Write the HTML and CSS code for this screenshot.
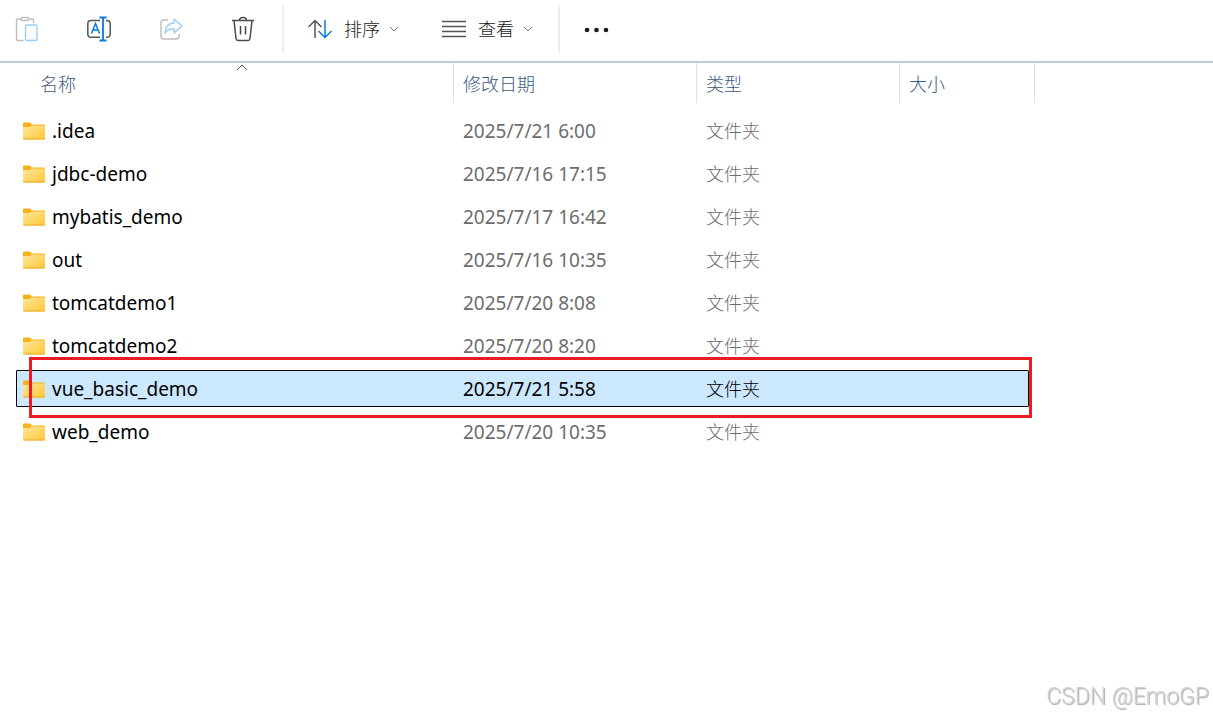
FILE: index.html
```html
<!DOCTYPE html>
<html lang="zh-CN">

<head>
    <meta charset="UTF-8">
    <meta name="viewport" content="width=device-width, initial-scale=1.0">
    <title>文件夹</title>
    <link rel="stylesheet" href="styles.css">
</head>

<body>
    <svg class="defs" width="0" height="0">
        <defs>
            <linearGradient id="folderFill" x1="0" y1="0" x2="1" y2="1">
                <stop offset="0" stop-color="#ffe69c" />
                <stop offset="1" stop-color="#ffc937" />
            </linearGradient>
            <symbol id="folder" viewBox="0 0 22 18">
                <path d="M0 1.500Q0 .5 1 .5H6.500Q7.500 .5 8 1.500L8.500 2.500H21Q22 2.500 22 3.500V8H0Z" fill="#f7b21b" />
                <path d="M0 5H7L8.500 3.500H22V16.500Q22 17.500 21 17.500H1Q0 17.500 0 16.500Z" fill="url(#folderFill)" />
                <path d="M0 16.500H22Q22 17.500 21 17.500H1Q0 17.500 0 16.500Z" fill="#eba92a" />
            </symbol>
        </defs>
    </svg>

    <div class="toolbar">
        <div class="icons">
            <button class="iconBtn" aria-label="粘贴" disabled>
                <svg width="24" height="26" viewBox="0 0 24 26" fill="none" stroke-width="1.400">
                    <path d="M6 3H3Q1.500 3 1.500 4.500V23Q1.500 24.500 3 24.500H8.500M14.500 3H17Q18.500 3 18.500 4.500V7" stroke="#bdbdbd" />
                    <rect x="6" y="1.500" width="8" height="3" rx="1.500" stroke="#bdbdbd" fill="#fff" />
                    <rect x="10.500" y="9" width="11.500" height="15.500" rx="1.500" stroke="#9dcdf3" fill="#fafdff" />
                </svg>
            </button>
            <button class="iconBtn" aria-label="重命名">
                <svg width="24" height="26" viewBox="0 0 24 26" fill="none" stroke-width="1.500">
                    <path d="M13 4.500H4Q.800 4.500 .800 8V18Q.800 21.300 4 21.300H13M19 4.500H20Q23.200 4.500 23.200 8V18Q23.200 21.300 20 21.300H19" stroke="#555" />
                    <path d="M4.500 17.500L8.500 7.500L12.500 17.500M6 14H11" stroke="#0b7ad6" />
                    <path d="M16 2V24M12.500 1.500H19.500M12.500 24.500H19.500" stroke="#0b7ad6" stroke-width="1.800" />
                </svg>
            </button>
            <button class="iconBtn" aria-label="共享" disabled>
                <svg width="24" height="26" viewBox="0 0 24 26" fill="none" stroke-width="1.400">
                    <path d="M9 4H5Q2 4 2 7V20Q2 23 5 23H17Q20 23 20 20V18" stroke="#bdbdbd" />
                    <path d="M15 3L23 10L15 17V13Q9 12.500 6 17Q6.500 7.500 15 7Z" stroke="#9dcdf3" stroke-linejoin="round" fill="#fafdff" />
                </svg>
            </button>
            <button class="iconBtn" aria-label="删除">
                <svg width="24" height="26" viewBox="0 0 24 26" fill="none" stroke="#4a4a4a" stroke-width="1.500">
                    <path d="M1 4.500H23M8.500 4.500Q8.500 1.500 12 1.500Q15.500 1.500 15.500 4.500M3 4.500L5 22.500Q5.300 24.500 7 24.500H17Q18.700 24.500 19 22.500L21 4.500M9.500 10V18.500M14.500 10V18.500" />
                </svg>
            </button>
        </div>
        <div class="separator"></div>
        <div class="menus">
            <button class="menuBtn">
                <svg width="24" height="20" viewBox="0 0 24 20" fill="none" stroke-width="1.500">
                    <path d="M7 19V1.500M.500 8L7 1.500L13.500 8" stroke="#555" />
                    <path d="M17 1V18.500M10.500 12L17 18.500L23.500 12" stroke="#0b7ad6" />
                </svg>
                <span>排序</span>
                <svg class="chevron" width="10" height="6" viewBox="0 0 10 6" fill="none" stroke="#777">
                    <path d="M1 1L5 5L9 1" />
                </svg>
            </button>
            <button class="menuBtn">
                <svg width="24" height="20" viewBox="0 0 24 20" fill="none" stroke="#555" stroke-width="1.500">
                    <path d="M0 2.500H24M0 7.500H24M0 12.500H24M0 17.500H24" />
                </svg>
                <span>查看</span>
                <svg class="chevron" width="10" height="6" viewBox="0 0 10 6" fill="none" stroke="#777">
                    <path d="M1 1L5 5L9 1" />
                </svg>
            </button>
        </div>
        <div class="separator"></div>
        <button class="moreBtn" aria-label="更多">
            <svg width="26" height="8" viewBox="0 0 26 8" fill="#1a1a1a">
                <circle cx="3" cy="5" r="2.300" />
                <circle cx="12.500" cy="5" r="2.300" />
                <circle cx="22" cy="5" r="2.300" />
            </svg>
        </button>
    </div>

    <table class="files">
        <thead>
            <tr>
                <th class="nameHead">名称
                    <svg class="sortArrow" width="12" height="7" viewBox="0 0 12 7" fill="none" stroke="#555">
                        <path d="M1 6L6 1L11 6" />
                    </svg>
                </th>
                <th>修改日期</th>
                <th>类型</th>
                <th>大小</th>
            </tr>
        </thead>
        <tbody>
            <tr>
                <td class="name"><svg class="folder"><use href="#folder" /></svg>.idea</td>
                <td>2025/7/21 6:00</td>
                <td class="type">文件夹</td>
                <td></td>
            </tr>
            <tr>
                <td class="name"><svg class="folder"><use href="#folder" /></svg>jdbc-demo</td>
                <td>2025/7/16 17:15</td>
                <td class="type">文件夹</td>
                <td></td>
            </tr>
            <tr>
                <td class="name"><svg class="folder"><use href="#folder" /></svg>mybatis_demo</td>
                <td>2025/7/17 16:42</td>
                <td class="type">文件夹</td>
                <td></td>
            </tr>
            <tr>
                <td class="name"><svg class="folder"><use href="#folder" /></svg>out</td>
                <td>2025/7/16 10:35</td>
                <td class="type">文件夹</td>
                <td></td>
            </tr>
            <tr>
                <td class="name"><svg class="folder"><use href="#folder" /></svg>tomcatdemo1</td>
                <td>2025/7/20 8:08</td>
                <td class="type">文件夹</td>
                <td></td>
            </tr>
            <tr>
                <td class="name"><svg class="folder"><use href="#folder" /></svg>tomcatdemo2</td>
                <td>2025/7/20 8:20</td>
                <td class="type">文件夹</td>
                <td></td>
            </tr>
            <tr class="selected">
                <td class="name"><svg class="folder"><use href="#folder" /></svg>vue_basic_demo</td>
                <td>2025/7/21 5:58</td>
                <td class="type">文件夹</td>
                <td></td>
            </tr>
            <tr>
                <td class="name"><svg class="folder"><use href="#folder" /></svg>web_demo</td>
                <td>2025/7/20 10:35</td>
                <td class="type">文件夹</td>
                <td></td>
            </tr>
        </tbody>
    </table>

    <div class="watermark">CSDN @EmoGP</div>
</body>

</html>
```

FILE: styles.css
```css
* {
    box-sizing: border-box;
}

body {
    margin: 0;
    background: #fff;
    color: #000;
    font-family: "Noto Sans", "Noto Sans CJK SC", sans-serif;
    font-size: 18px;
}

button {
    display: flex;
    align-items: center;
    padding: 0;
    border: none;
    background: none;
    color: #1a1a1a;
    font-family: inherit;
    font-size: 18px;
    font-weight: 300;
    line-height: 24px;
}

.defs {
    position: absolute;
}

/* toolbar */
.toolbar {
    display: flex;
    align-items: center;
    height: 63px;
    padding: 0 3px 4px;
    border-bottom: 2px solid #b9cdda;
}

.icons {
    display: flex;
    gap: 24px;
}

.iconBtn {
    justify-content: center;
    width: 48px;
    height: 48px;
}

.separator {
    width: 2px;
    height: 48px;
    margin: 0 24px 0 15px;
    background: #eee;
}

.menus {
    display: flex;
    gap: 43px;
    margin-right: 10px;
}

.menuBtn {
    height: 48px;
}

.menuBtn span {
    margin: 0 9px 0 12px;
}

.moreBtn {
    height: 48px;
}

/* file list */
.files {
    display: block;
    margin: 0 178px 0 16px;
}

thead,
tbody {
    display: block;
}

tr {
    display: grid;
}

th,
td {
    display: flex;
    align-items: center;
    padding: 0 0 0 9px;
}

thead tr {
    grid-template-columns: 438fr 243fr 203fr 135fr;
    height: 40px;
}

th {
    border-right: 1px solid #e0e0e0;
    color: #405a7c;
    font-weight: 300;
}

.nameHead {
    position: relative;
    margin-left: 15px;
}

.sortArrow {
    position: absolute;
    top: 1px;
    left: 50%;
    margin-left: -6px;
}

tbody {
    padding: 9px 6px 0 0;
}

tbody tr {
    position: relative;
    grid-template-columns: 438fr 243fr 203fr 129fr;
    height: 37px;
    margin-bottom: 6px;
}

td {
    color: #6d6d6d;
    font-size: 19px;
}

.name {
    padding-left: 7px;
    color: #000;
}

.type {
    padding-bottom: 2px;
    font-size: 18px;
    font-weight: 300;
}

.folder {
    width: 22px;
    height: 18px;
    margin-right: 7px;
}

.selected {
    border-radius: 1px;
    outline: 1px solid #000;
    outline-offset: -1px;
    background: #cce8ff;
}

.selected td {
    color: #000;
}

.selected::after {
    content: "";
    position: absolute;
    top: -13px;
    right: -3px;
    bottom: -11px;
    left: 13px;
    border: 3px solid #ed1c24;
}

.watermark {
    position: fixed;
    right: 4px;
    bottom: 5px;
    color: #d2d2d2;
    font-family: Roboto, sans-serif;
    font-size: 23px;
    font-weight: 300;
    line-height: 28px;
    text-shadow: 1px 1px 1px #aaa;
}
```
